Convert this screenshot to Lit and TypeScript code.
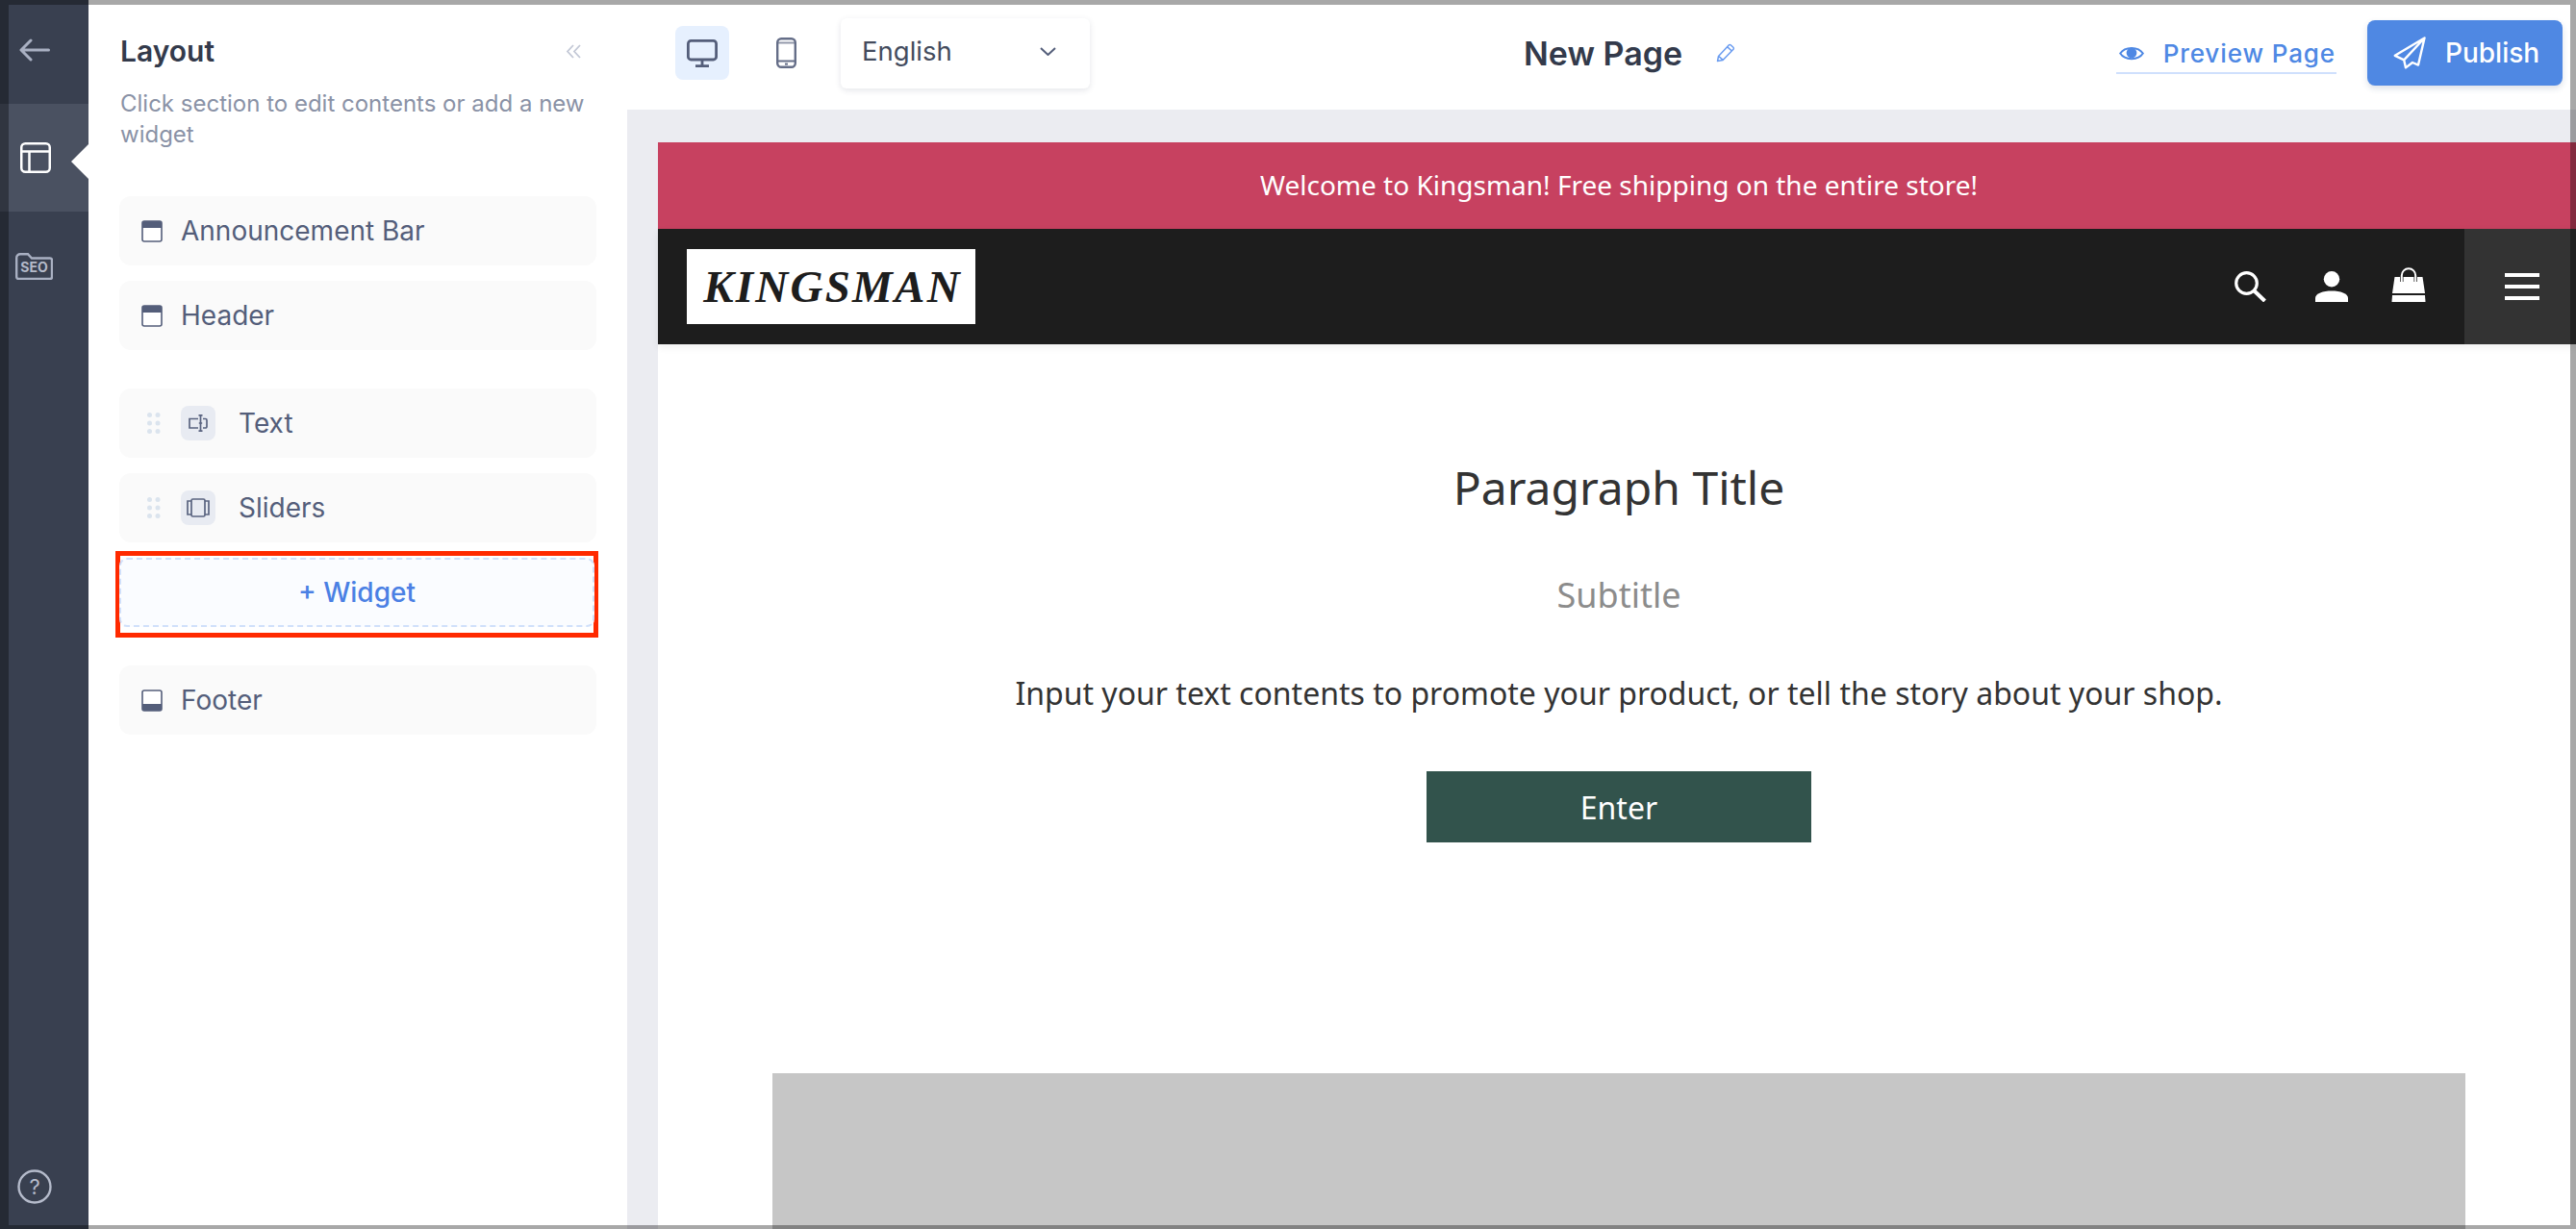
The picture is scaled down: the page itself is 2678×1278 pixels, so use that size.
import { LitElement, html, css, svg } from "lit";
import { customElement } from "lit/decorators.js";

const sectionTop = html`<svg class="sec" viewBox="0 0 22 23"><rect x="1" y="1" width="20" height="21" rx="2" fill="#fff" stroke="#545e7a" stroke-width="1.6"/><path d="M1 3a2 2 0 0 1 2-2h16a2 2 0 0 1 2 2v5H1z" fill="#545e7a"/></svg>`;
const sectionBottom = html`<svg class="sec" viewBox="0 0 22 23"><rect x="1" y="1" width="20" height="21" rx="2" fill="#fff" stroke="#545e7a" stroke-width="1.6"/><path d="M1 15h20v5a2 2 0 0 1-2 2H3a2 2 0 0 1-2-2z" fill="#545e7a"/></svg>`;
const dots = html`<svg class="dots" viewBox="0 0 14 22"><g fill="#dbe4ee">${[2.5, 11, 19.5].map(
  (y) => svg`<circle cx="2.5" cy="${y}" r="2.5"/><circle cx="11" cy="${y}" r="2.5"/>`
)}</g></svg>`;

@customElement("app-root")
export class AppRoot extends LitElement {
  static styles = css`
    :host { display: block; width: 2678px; height: 1278px; position: relative; overflow: hidden; font-family: Inter, "Liberation Sans", sans-serif; background: #fff; }
    svg { display: block; flex: none; }
    .app { display: flex; height: 100%; }
    .frame { position: absolute; inset: 0; border-style: solid; border-width: 5px 6px 4px 9px; border-color: rgba(0,0,0,.34); pointer-events: none; z-index: 5; }

    .side { width: 92px; flex: none; background: #394050; display: flex; flex-direction: column; }
    .side-item { height: 108px; display: flex; align-items: center; padding: 0 0 4px 20px; box-sizing: border-box; }
    .side-item.active { height: 112px; background: #4a5161; position: relative; padding: 0 0 0 21px; margin-bottom: 43px; }
    .side-item.active::after { content: ""; position: absolute; right: 0; top: 42px; border-style: solid; border-width: 18.5px 18px 18.5px 0; border-color: transparent #fff transparent transparent; }
    .seo { padding-left: 16px; }
    .help { margin-top: auto; padding: 0 0 26px 18px; }

    .panel { width: 560px; flex: none; box-sizing: border-box; padding: 33px 32px 0; background: #fff; }
    .panel-head { display: flex; justify-content: space-between; align-items: center; height: 40px; padding-left: 1px; padding-right: 15px; }
    .panel-title { font-size: 30px; line-height: 40px; font-weight: 600; color: #333a4b; }
    .desc { margin: 19px 0 0 1px; width: 490px; font-size: 24px; line-height: 32px; color: #8a92a6; }
    .rows { margin-top: 48px; display: flex; flex-direction: column; gap: 16px; }
    .rows + .rows { margin-top: 40px; }
    .row { height: 72px; border-radius: 12px; background: #fafafa; display: flex; align-items: center; padding-left: 23px; font-size: 28px; color: #545e7a; }
    .sec { width: 22px; height: 23px; margin-right: 19px; }
    .dots { width: 14px; height: 22px; margin: 0 21px 0 6px; }
    .ibox { width: 36px; height: 36px; border-radius: 8px; background: #e8ebf2; display: flex; align-items: center; justify-content: center; margin-right: 24px; }
    .add-wrap { margin: 9px -2px 0 -4px; border: 5px solid #ff2a00; height: 90px; box-sizing: border-box; padding: 2px 0 6px 0; }
    .add { height: 100%; box-sizing: border-box; margin: 0 -1px; border: 2px dashed #d0e0fb; border-radius: 8px; background: #fafcff; display: flex; align-items: center; justify-content: center; color: #4a80e4; font-size: 28px; font-weight: 500; }
    .foot { margin-top: 29px; }

    .main { flex: 1; min-width: 0; display: flex; flex-direction: column; }
    .top { height: 114px; flex: none; box-sizing: border-box; padding: 0 14px 4px 50px; display: flex; align-items: center; background: #fff; }
    .dev { width: 56px; height: 56px; border-radius: 8px; display: flex; align-items: center; justify-content: center; }
    .dev.on { background: #e6f0fe; }
    .dev + .dev { margin-left: 31px; }
    .select { margin-left: 29px; width: 259px; height: 73px; box-sizing: border-box; border-radius: 6px; box-shadow: 0 2px 6px rgba(40,50,80,.12); display: flex; align-items: center; justify-content: space-between; padding: 0 35px 4px 22px; font-size: 27.5px; color: #444c5e; }
    .title { margin-left: 451px; font-size: 34px; font-weight: 600; color: #333a4b; }
    .pencil { margin-left: 35px; }
    .right { margin-left: auto; display: flex; align-items: center; }
    .preview-link { display: flex; align-items: center; gap: 20px; height: 44px; padding: 2px 1px 0 3px; box-sizing: border-box; border-bottom: 2px solid #cfe0fd; color: #4e88e4; font-size: 26px; font-weight: 500; letter-spacing: .9px; }
    .publish { margin-left: 32px; width: 203px; height: 68px; border-radius: 8px; background: #4f88e3; box-shadow: 0 3px 6px rgba(40,60,110,.16); display: flex; align-items: center; padding-left: 27px; box-sizing: border-box; gap: 20px; color: #fff; font-size: 28px; font-weight: 500; }

    .canvas { flex: 1; min-height: 0; background: #ebecf1; padding: 34px 0 0 32px; overflow: hidden; }
    .preview { width: 1998px; height: 100%; background: #fff; display: flex; flex-direction: column; align-items: center; font-family: "Noto Sans", sans-serif; color: #333; }
    .ann { width: 100%; height: 90px; flex: none; background: #c74160; color: #fff; font-size: 28px; display: flex; align-items: center; justify-content: center; padding-bottom: 2px; box-sizing: border-box; }
    .hdr { width: 100%; height: 120px; flex: none; background: #1d1d1d; display: flex; align-items: center; padding-left: 30px; box-sizing: border-box; box-shadow: 0 3px 8px rgba(0,0,0,.07); }
    .logo { width: 300px; height: 78px; box-sizing: border-box; padding-left: 3px; background: #fff; color: #1d1d1d; font-family: "Liberation Serif", serif; font-style: italic; font-weight: 700; font-size: 47px; letter-spacing: 2.25px; display: flex; align-items: center; justify-content: center; }
    .hicons { margin-left: auto; display: flex; align-items: center; }
    .i-user { margin-left: 51px; }
    .i-bag { margin: 0 0 4px 45px; }
    .menu { margin-left: 40px; width: 120px; height: 120px; background: #333; display: flex; flex-direction: column; justify-content: center; gap: 8px; padding-left: 42px; box-sizing: border-box; }
    .menu span { display: block; width: 36px; height: 4px; background: #fff; }
    .h1 { margin-top: 116px; font-size: 48px; line-height: 66px; }
    .h2 { margin-top: 54px; font-size: 36px; line-height: 50px; color: #8c8c8c; }
    .body { margin-top: 55px; font-size: 32px; line-height: 44px; }
    .enter { margin-top: 59px; width: 400px; height: 74px; flex: none; background: #32534c; color: #fff; font-size: 32px; display: flex; align-items: center; justify-content: center; }
    .gray { margin-top: 240px; width: 1760px; flex: 1; background: #c6c6c6; }
  `;

  render() {
    return html`
      <div class="app">
        <aside class="side">
          <div class="side-item">
            <svg width="32" height="24" viewBox="0 0 32 24" fill="none" stroke="#a9b0c2" stroke-width="3" stroke-linecap="round" stroke-linejoin="round"><path d="M30.5 12H2.5M12 2 2 12l10 10"/></svg>
          </div>
          <div class="side-item active">
            <svg width="32" height="32" viewBox="0 0 32 32" fill="none" stroke="#fff" stroke-width="2.5"><rect x="1.25" y="1.25" width="29.5" height="29.5" rx="4"/><path d="M1 9.5h30M9.5 9.5V31"/></svg>
          </div>
          <div class="seo">
            <svg width="39" height="28" viewBox="0 0 39 28" fill="none"><path d="M1.2 5a3.8 3.8 0 0 1 3.8-3.8h8l4 4.3h19a2 2 0 0 1 2 2V25a2 2 0 0 1-2 2H3.2a2 2 0 0 1-2-2Z" stroke="#a9b0c2" stroke-width="2.4"/><text x="19.5" y="20.2" text-anchor="middle" font-family="Inter, sans-serif" font-weight="700" font-size="14" fill="#b4bac9">SEO</text></svg>
          </div>
          <div class="help">
            <svg width="36" height="36" viewBox="0 0 36 36" fill="none"><circle cx="18" cy="18" r="16.5" stroke="#b5bbcb" stroke-width="2.4"/><text x="18" y="26" text-anchor="middle" font-family="Inter, sans-serif" font-size="22" fill="#b5bbcb">?</text></svg>
          </div>
        </aside>

        <section class="panel">
          <div class="panel-head">
            <div class="panel-title">Layout</div>
            <svg width="17" height="15" viewBox="0 0 17 15" fill="none" stroke="#c3c8d6" stroke-width="1.8"><path d="M8 1 2 7.5 8 14M15 1 9 7.5 15 14"/></svg>
          </div>
          <div class="desc">Click section to edit contents or add a new widget</div>
          <div class="rows">
            <div class="row">${sectionTop}Announcement Bar</div>
            <div class="row">${sectionTop}Header</div>
          </div>
          <div class="rows">
            <div class="row">${dots}<span class="ibox"><svg width="20" height="18" viewBox="0 0 20 18" fill="none" stroke="#5a6480" stroke-width="1.7"><path d="M10 4.5H1V14H10M15 4.5h2.5A1.5 1.5 0 0 1 19 6v6.5a1.5 1.5 0 0 1-1.5 1.5H15M12.5 1v16M10.5.8h1.5l.5.7.5-.7h1.5M10.5 17.2H12l.5-.7.5.7h1.5M10.8 9h3.4"/></svg></span>Text</div>
            <div class="row">${dots}<span class="ibox"><svg width="24" height="20" viewBox="0 0 24 20" fill="none" stroke="#5a6480" stroke-width="1.7"><rect x="5" y="1" width="14" height="18" rx="1.5"/><path d="M5 3H1v14h4M19 3h4v14h-4"/></svg></span>Sliders</div>
          </div>
          <div class="add-wrap"><div class="add">+ Widget</div></div>
          <div class="row foot">${sectionBottom}Footer</div>
        </section>

        <div class="main">
          <header class="top">
            <div class="dev on">
              <svg width="32" height="29" viewBox="0 0 32 29" fill="none" stroke="#545e7a" stroke-width="2.8"><rect x="1.4" y="1.4" width="29.2" height="19.6" rx="3"/><path d="M16 21v7M9 27.6h14"/></svg>
            </div>
            <div class="dev">
              <svg width="21" height="32" viewBox="0 0 21 32" fill="none" stroke="#656e88" stroke-width="2.4"><rect x="1.2" y="1.2" width="18.6" height="29.6" rx="4"/><path d="M1.5 5.5h18" stroke-width="2" opacity=".7"/><path d="M1.5 24.5h18" stroke-width="2"/><path d="M9 27.6h3" stroke-width="2"/></svg>
            </div>
            <div class="select">English
              <svg width="17" height="9" viewBox="0 0 17 9" fill="none" stroke="#545e7a" stroke-width="2"><path d="M1 1l7.5 7L16 1"/></svg>
            </div>
            <div class="title">New Page</div>
            <svg class="pencil" width="20" height="20" viewBox="0 0 20 20" fill="none" stroke="#6a9cf0" stroke-width="1.5" stroke-linejoin="round"><path d="M1.5 18.6l1-5.1L13.2 1.9a1.4 1.4 0 0 1 2-.1l2.7 2.4a1.4 1.4 0 0 1 .1 2L7.1 17.4ZM2.6 13.4l4.6 4M11.6 3.6l4.8 4.4"/></svg>
            <div class="right">
              <div class="preview-link">
                <svg width="26" height="17" viewBox="0 0 26 17" fill="none"><path d="M1.2 8.5C6 1 20 1 24.8 8.5 20 16 6 16 1.2 8.5Z" stroke="#4e88e4" stroke-width="2"/><circle cx="13" cy="8" r="5.4" fill="#4e88e4"/></svg>
                Preview Page
              </div>
              <div class="publish">
                <svg width="34" height="34" viewBox="0 0 34 34" fill="none" stroke="#fff" stroke-width="2.4" stroke-linejoin="round" stroke-linecap="round"><path d="M32.5 1.5 1.8 19.8l9.4 4.6 1.8 8 7-5.4 6 2.6ZM32.5 1.5 11.2 24.4"/></svg>
                Publish
              </div>
            </div>
          </header>
          <div class="canvas">
            <div class="preview">
              <div class="ann">Welcome to Kingsman! Free shipping on the entire store!</div>
              <div class="hdr">
                <div class="logo">KINGSMAN</div>
                <div class="hicons">
                  <svg width="33" height="32" viewBox="0 0 33 32" fill="none" stroke="#fff"><circle cx="12.5" cy="12.5" r="10.8" stroke-width="3.2"/><path d="M20 20l11.5 11" stroke-width="4"/></svg>
                  <svg class="i-user" width="34" height="32" viewBox="0 0 34 32" fill="#fff"><circle cx="17" cy="8.2" r="8.2"/><path d="M0 32v-4c0-5 8-7.5 17-7.5s17 2.5 17 7.5v4Z"/></svg>
                  <svg class="i-bag" width="36" height="36" viewBox="0 0 36 36" fill="#fff"><path d="M3.5 10h29L35 27H1Z"/><path d="M1 29h34l.5 7H.5Z"/><path d="M10.8 15V8.5a7.2 7.2 0 0 1 14.4 0V15" fill="none" stroke="#1d1d1d" stroke-width="3.4"/><path d="M10.8 15V8.5a7.2 7.2 0 0 1 14.4 0V15" fill="none" stroke="#fff" stroke-width="2"/></svg>
                  <div class="menu"><span></span><span></span><span></span></div>
                </div>
              </div>
              <div class="h1">Paragraph Title</div>
              <div class="h2">Subtitle</div>
              <div class="body">Input your text contents to promote your product, or tell the story about your shop.</div>
              <div class="enter">Enter</div>
              <div class="gray"></div>
            </div>
          </div>
        </div>
      </div>
      <div class="frame"></div>
    `;
  }
}
